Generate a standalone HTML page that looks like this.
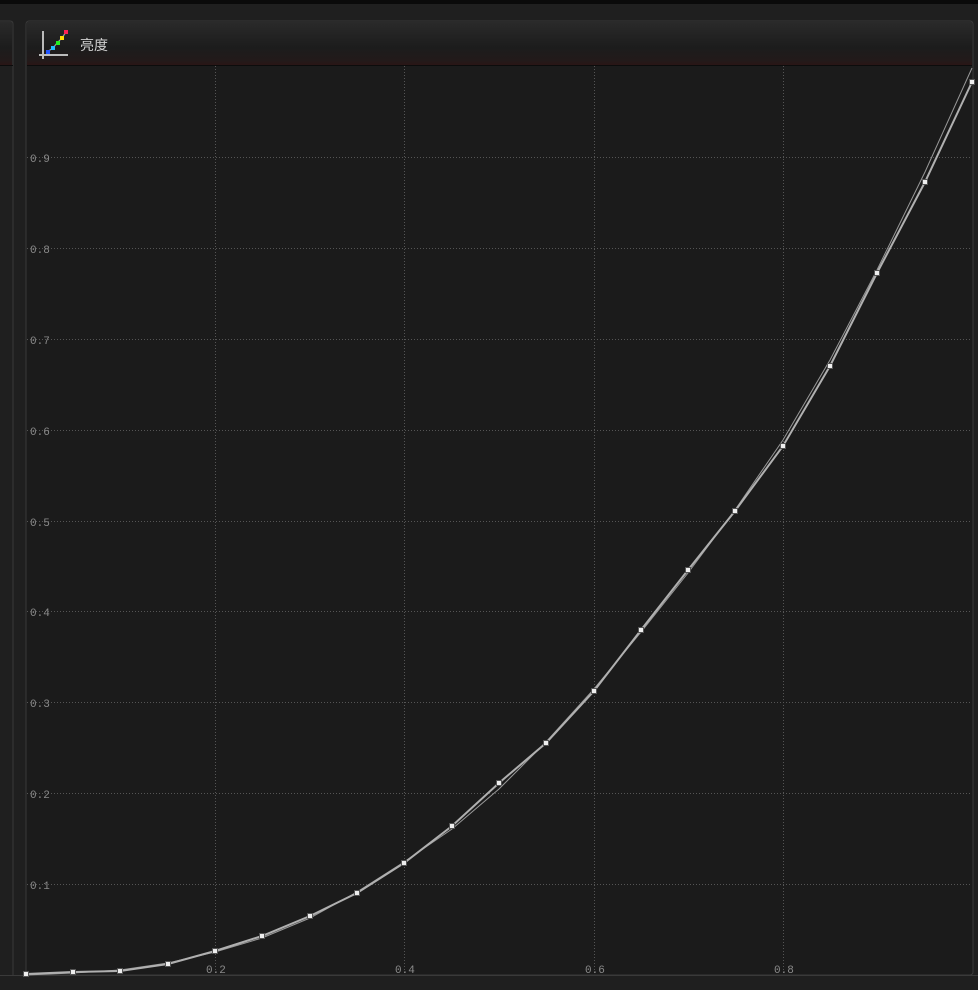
<!DOCTYPE html>
<html><head><meta charset="utf-8"><style>
html,body{margin:0;padding:0;background:#1f1f1f;width:978px;height:990px;overflow:hidden}
</style></head><body>
<svg width="978" height="990" xmlns="http://www.w3.org/2000/svg" style="position:absolute;left:0;top:0">
<defs>
<linearGradient id="hd" x1="0" y1="0" x2="0" y2="1">
<stop offset="0" stop-color="#2a2a2a"/><stop offset="0.6" stop-color="#1c1c1c"/><stop offset="0.9" stop-color="#221a1a"/><stop offset="1" stop-color="#2a1616"/>
</linearGradient>
</defs>
<rect x="0" y="0" width="978" height="990" fill="#1f1f1f"/>
<rect x="0" y="0" width="978" height="4" fill="#0a0a0a"/>
<path d="M0 21 H10 Q13 21 13 24 V990" fill="none" stroke="#3a3a3a" stroke-width="1"/>
<rect x="0" y="22" width="12" height="43" fill="url(#hd)"/>
<line x1="0" y1="65.5" x2="13" y2="65.5" stroke="#0c0c0c"/>
<rect x="26" y="21" width="947" height="954" rx="3" fill="#1b1b1b" stroke="#3a3a3a"/>
<rect x="27" y="22" width="945" height="43" fill="url(#hd)"/>
<line x1="27" y1="65.5" x2="972" y2="65.5" stroke="#0c0c0c"/>
<rect x="0" y="976" width="978" height="14" fill="#1f1f1f"/>
<line x1="0" y1="975.5" x2="978" y2="975.5" stroke="#3a3a3a"/>
<line x1="43" y1="31" x2="43" y2="59" stroke="#bbb" stroke-width="2"/>
<line x1="39" y1="55" x2="68" y2="55" stroke="#bbb" stroke-width="2"/>
<polyline points="47,52 53,48 57,43 62,38 66,32" fill="none" stroke="#999" stroke-width="1.2"/>
<rect x="46" y="50" width="4" height="4" fill="#2255ff"/>
<rect x="51" y="46" width="4" height="4" fill="#22bbff"/>
<rect x="56" y="41" width="4" height="4" fill="#22ee22"/>
<rect x="60" y="36" width="4" height="4" fill="#ffdd00"/>
<rect x="64" y="30" width="4" height="4" fill="#ff2255"/>
<text x="80" y="50" font-family="Liberation Sans, Noto Sans CJK SC, sans-serif" font-size="14" fill="#d0d0d0">亮度</text>
<g stroke="#555" stroke-dasharray="1,2" stroke-width="1">
<line x1="215.5" y1="66" x2="215.5" y2="975"/>
<line x1="404.5" y1="66" x2="404.5" y2="975"/>
<line x1="594.5" y1="66" x2="594.5" y2="975"/>
<line x1="783.5" y1="66" x2="783.5" y2="975"/>
<line x1="27" y1="884.5" x2="972" y2="884.5"/>
<line x1="27" y1="793.5" x2="972" y2="793.5"/>
<line x1="27" y1="702.5" x2="972" y2="702.5"/>
<line x1="27" y1="611.5" x2="972" y2="611.5"/>
<line x1="27" y1="521.5" x2="972" y2="521.5"/>
<line x1="27" y1="430.5" x2="972" y2="430.5"/>
<line x1="27" y1="339.5" x2="972" y2="339.5"/>
<line x1="27" y1="248.5" x2="972" y2="248.5"/>
<line x1="27" y1="157.5" x2="972" y2="157.5"/>
</g>
<g font-family="Liberation Mono, monospace" font-size="11" fill="#8a8a8a">
<text x="30" y="162">0.9</text><text x="30" y="253">0.8</text><text x="30" y="344">0.7</text>
<text x="30" y="435">0.6</text><text x="30" y="526">0.5</text><text x="30" y="616">0.4</text>
<text x="30" y="707">0.3</text><text x="30" y="798">0.2</text><text x="30" y="889">0.1</text>
<text x="206" y="973">0.2</text><text x="395" y="973">0.4</text><text x="585" y="973">0.6</text><text x="774" y="973">0.8</text>
</g>
<polyline fill="none" stroke="#999" stroke-width="1" points="26,975 73,973 120,970 168,963 215,952 262,938 310,918 357,892 404,862 452,829 499,789 546,742 594,689 641,632 688,573 735,510 783,440 830,360 877,270 925,172 972,68"/>
<polyline fill="none" stroke="#b0b0b0" stroke-width="2" points="26,974 73,972 120,971 168,964 215,951 262,936 310,916 357,893 404,863 452,826 499,783 546,743 594,691 641,630 688,570 735,511 783,446 830,366 877,273 925,182 972,82"/>
<g fill="#eee" stroke="#555" stroke-width="1">
<rect x="23.5" y="971.5" width="5" height="5"/><rect x="70.5" y="969.5" width="5" height="5"/><rect x="117.5" y="968.5" width="5" height="5"/>
<rect x="165.5" y="961.5" width="5" height="5"/><rect x="212.5" y="948.5" width="5" height="5"/><rect x="259.5" y="933.5" width="5" height="5"/>
<rect x="307.5" y="913.5" width="5" height="5"/><rect x="354.5" y="890.5" width="5" height="5"/><rect x="401.5" y="860.5" width="5" height="5"/>
<rect x="449.5" y="823.5" width="5" height="5"/><rect x="496.5" y="780.5" width="5" height="5"/><rect x="543.5" y="740.5" width="5" height="5"/>
<rect x="591.5" y="688.5" width="5" height="5"/><rect x="638.5" y="627.5" width="5" height="5"/><rect x="685.5" y="567.5" width="5" height="5"/>
<rect x="732.5" y="508.5" width="5" height="5"/><rect x="780.5" y="443.5" width="5" height="5"/><rect x="827.5" y="363.5" width="5" height="5"/>
<rect x="874.5" y="270.5" width="5" height="5"/><rect x="922.5" y="179.5" width="5" height="5"/><rect x="969.5" y="79.5" width="5" height="5"/>
</g>
</svg>
</body></html>
